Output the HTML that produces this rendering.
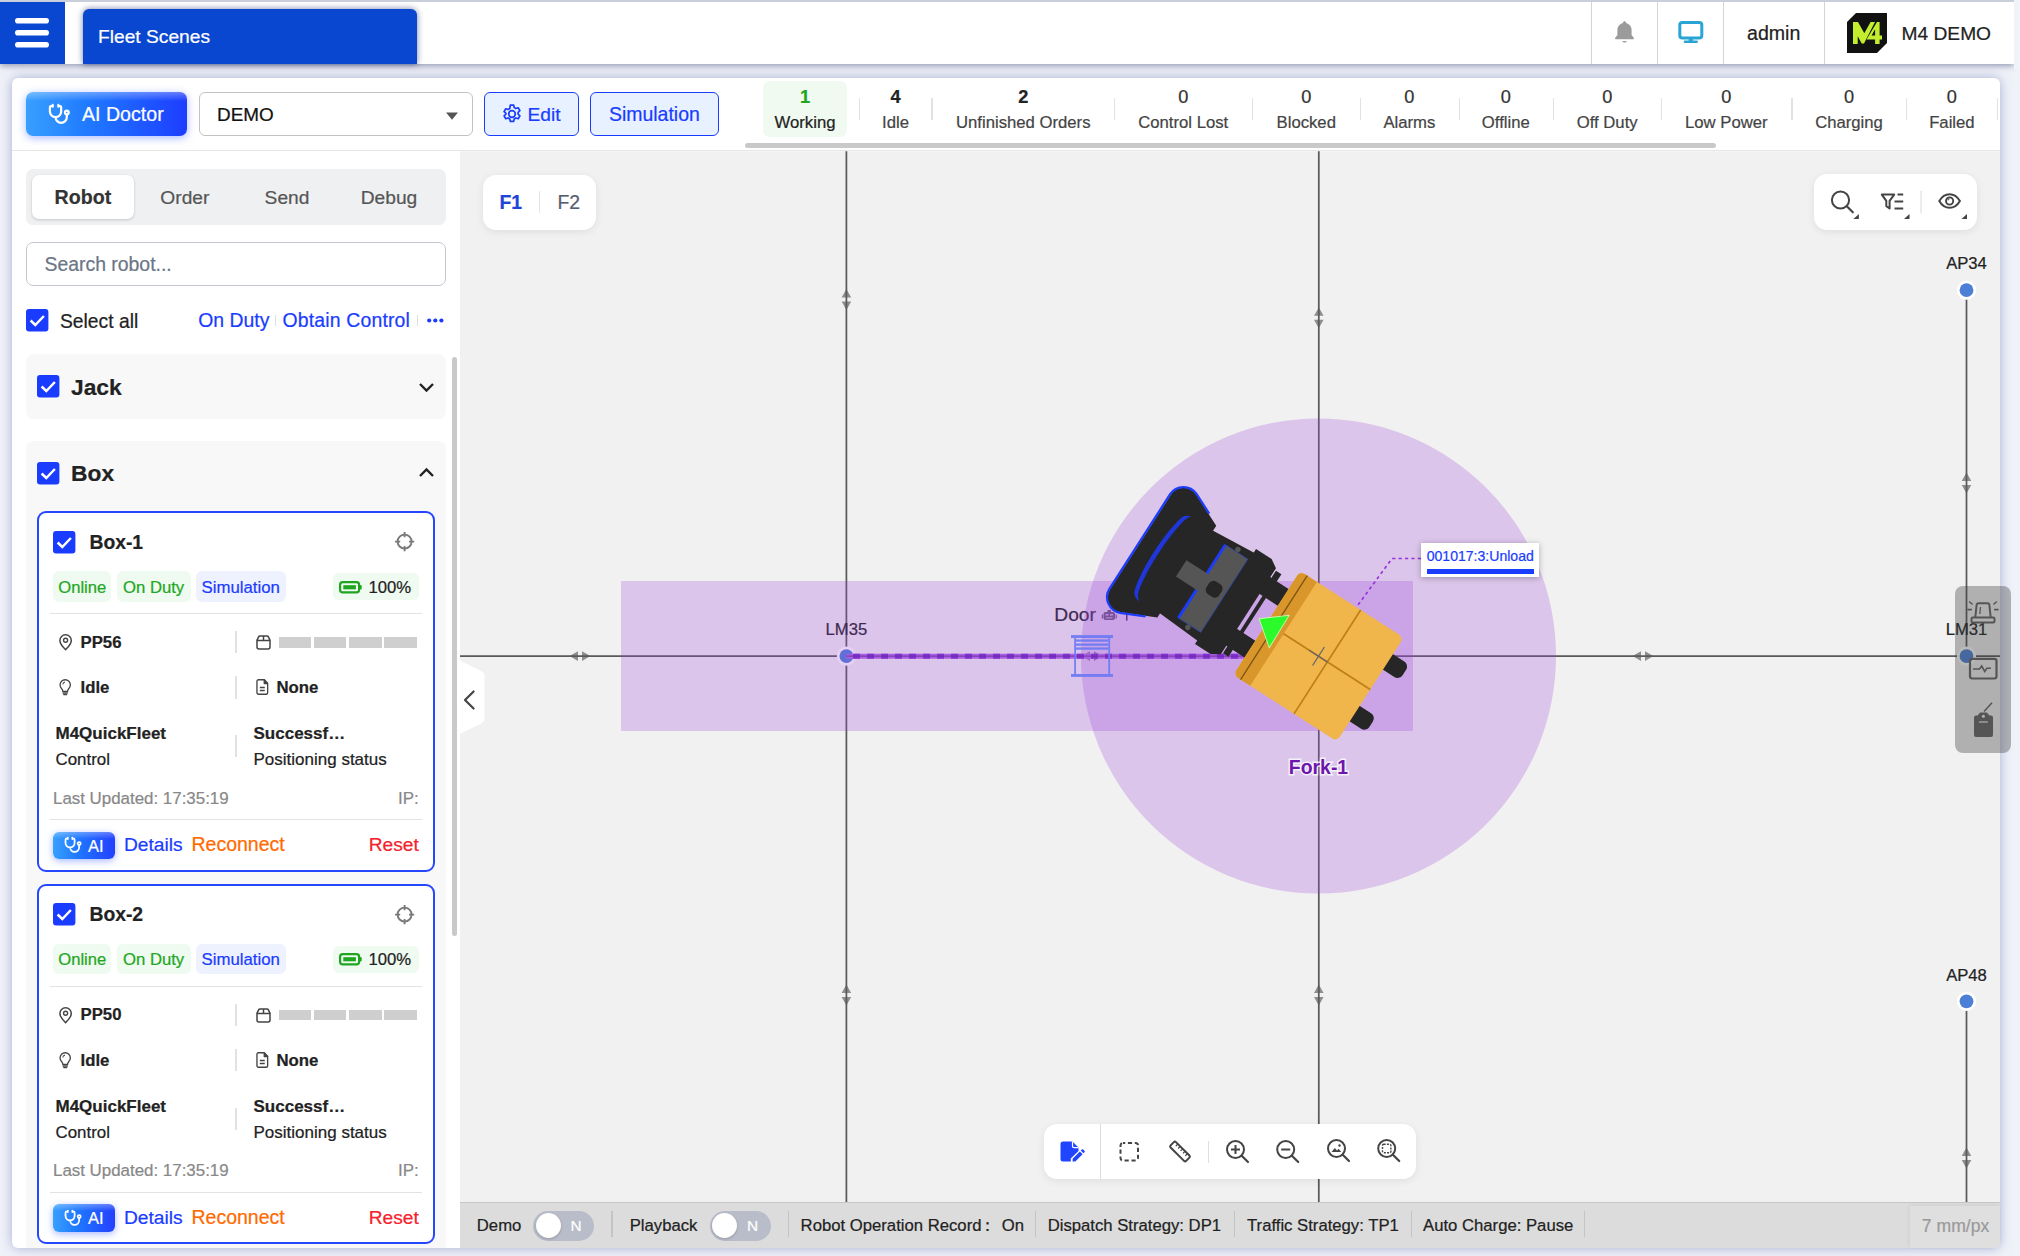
<!DOCTYPE html>
<html lang="en"><head><meta charset="utf-8"><title>Fleet Scenes</title>
<style>
html,body{margin:0;padding:0;}
body{width:2020px;height:1256px;overflow:hidden;position:relative;background:#e3e7f2;font-family:"Liberation Sans", sans-serif;}
.b{position:absolute;box-sizing:border-box;}
.t{position:absolute;white-space:nowrap;-webkit-text-stroke:.22px currentColor;}
svg{overflow:visible;}
</style></head><body>
<div class="b" style="left:0px;top:0px;width:2020px;height:1256px;background:#f0f2f9;"></div>
<div class="b" style="left:12px;top:78px;width:1988px;height:1169.5px;background:#fff;border-radius:6px;box-shadow:0 0 12px rgba(98,112,170,.52);"></div>
<div class="b" style="left:0px;top:0px;width:2014px;height:64px;background:#fff;border-top:2px solid #c9cedb;box-shadow:0 2px 6px rgba(60,70,115,.5);"></div>
<div class="b" style="left:2014px;top:0px;width:6px;height:70px;background:#f1f3f9;"></div>
<div class="b" style="left:0px;top:2px;width:65px;height:62px;background:#0a47d1;"></div>
<svg class="b" style="left:15px;top:18px;" width="34" height="30" viewBox="0 0 34 30"><rect x="0" y="0" width="34" height="5.6" rx="2.8" fill="#fff"/><rect x="0" y="12" width="34" height="5.6" rx="2.8" fill="#fff"/><rect x="0" y="24" width="34" height="5.6" rx="2.8" fill="#fff"/></svg>
<div class="b" style="left:83px;top:9px;width:334px;height:55px;background:#0a47d1;border-radius:6px 6px 0 0;box-shadow:0 0 6px rgba(0,20,90,.55);"></div>
<div class="t" style="top:26px;font-size:19.2px;line-height:21px;color:#fff;left:98px;">Fleet Scenes</div>
<div class="b" style="left:1591px;top:2px;width:1.3px;height:62px;background:#d4d4d4;"></div>
<div class="b" style="left:1657px;top:2px;width:1.3px;height:62px;background:#d4d4d4;"></div>
<div class="b" style="left:1723px;top:2px;width:1.3px;height:62px;background:#d4d4d4;"></div>
<div class="b" style="left:1824px;top:2px;width:1.3px;height:62px;background:#d4d4d4;"></div>
<svg class="b" style="left:1613px;top:20.3px;" width="23" height="24.5" viewBox="0 0 24 26" preserveAspectRatio="none"><path d="M12 1.2c-.9 0-1.6.7-1.6 1.6v.5C7 4.1 4.6 7.1 4.6 10.6v5.2L2.2 19c-.4.5 0 1.3.7 1.3h18.2c.7 0 1.1-.8.7-1.3l-2.4-3.2v-5.2c0-3.5-2.4-6.5-5.8-7.3v-.5c0-.9-.7-1.6-1.6-1.6z" fill="#9b9b9b"/><path d="M9.6 22.2c.4 1 1.300 1.600 2.400 1.600s2-.6 2.400-1.600z" fill="#9b9b9b"/></svg>
<svg class="b" style="left:0px;top:0px;" width="2020" height="64" viewBox="0 0 2020 64"><rect x="1679.800" y="22.500" width="22" height="15.500" rx="2.600" fill="none" stroke="#2aa5d3" stroke-width="3"/><rect x="1688.700" y="38.500" width="4.200" height="3" fill="#2aa5d3"/><rect x="1683.700" y="40.400" width="14.200" height="2.600" rx="1.200" fill="#2aa5d3"/></svg>
<div class="t" style="top:22px;font-size:19.6px;line-height:22px;color:#222;left:1747px;">admin</div>
<svg class="b" style="left:1847px;top:13px;" width="40" height="40" viewBox="0 0 40 40"><path d="M9 0H40V30L30 40H0V9Z" fill="#111"/><g fill="#c3ee2f"><path d="M6 31V9.500h5.200L17 20l0 0V31h-4.600V19.600L11 17.500V31z" fill="none"/><path d="M6 31V9h5l6.300 11.200L23.600 9H28l-11 21.500h-2.300l-4-7.300V31z"/><path d="M30 9h2.600v13.500H35v4h-2.400V31h-4.500v-4.500H19.500L30 9zm-1.900 13.500v-6.300l-3.500 6.300z"/></g></svg>
<div class="t" style="top:23px;font-size:19.2px;line-height:21px;color:#222;left:1901.5px;">M4 DEMO</div>
<div class="b" style="left:12px;top:150px;width:1988px;height:1.3px;background:#e6e6e6;"></div>
<div class="b" style="left:26px;top:91.5px;width:161px;height:44.5px;border-radius:7px;background:linear-gradient(180deg,rgba(255,255,255,.32) 0,rgba(255,255,255,0) 9px),linear-gradient(90deg,#38a0ff 0%,#1f78ff 40%,#1d3dff 100%);box-shadow:0 2px 8px rgba(40,80,255,.4);"></div>
<svg class="b" style="left:48.3px;top:102.9px;" width="22.6" height="22.6" viewBox="0 0 24 24"><g fill="none" stroke="#fff" stroke-width="2.350" stroke-linecap="round" stroke-linejoin="round"><path d="M11 2v2M5 2v2M5 3H4a2 2 0 0 0-2 2v4a6 6 0 0 0 12 0V5a2 2 0 0 0-2-2h-1M8 15a6 6 0 0 0 12 0v-3"/><circle cx="20" cy="10" r="2"/></g></svg>
<div class="t" style="top:103px;font-size:19.6px;line-height:22px;color:#fff;left:82px;">AI Doctor</div>
<div class="b" style="left:198.5px;top:92px;width:274px;height:44px;background:#fff;border:1.3px solid #c3c3c3;border-radius:6px;"></div>
<div class="t" style="top:104px;font-size:18.9px;line-height:21px;color:#111;left:217px;">DEMO</div>
<svg class="b" style="left:445.5px;top:111.5px;" width="12" height="8" viewBox="0 0 12 8"><path d="M0 0.500h12L6 7.800z" fill="#555"/></svg>
<div class="b" style="left:483.75px;top:91.75px;width:95px;height:44.5px;background:#e8f1ff;border:1.900px solid #1a3cff;border-radius:6px;"></div>
<svg class="b" style="left:501.75px;top:104px;" width="20" height="20" viewBox="0 0 20 20"><path d="M10 6.700a3.300 3.300 0 1 0 0 6.600a3.300 3.300 0 0 0 0-6.600z" fill="none" stroke="#1a3cff" stroke-width="1.700"/><path d="M8.300 1.200h3.400l.5 2.400 1.700.95 2.300-.8 1.700 2.950-1.800 1.600v1.900l1.800 1.600-1.700 2.950-2.300-.8-1.700.95-.5 2.400H8.300l-.5-2.400-1.700-.95-2.300.8-1.700-2.950 1.800-1.600V9.300L2.100 7.700l1.700-2.950 2.300.8 1.700-.95z" fill="none" stroke="#1a3cff" stroke-width="1.700" stroke-linejoin="round"/></svg>
<div class="t" style="top:104px;font-size:19.2px;line-height:21px;color:#1a3cff;left:527.5px;">Edit</div>
<div class="b" style="left:590.25px;top:91.75px;width:128.5px;height:44.5px;background:#e8f1ff;border:1.900px solid #1a3cff;border-radius:6px;"></div>
<div class="t" style="top:103px;font-size:19.45px;line-height:22px;color:#1a3cff;left:609px;">Simulation</div>
<div class="b" style="left:763.25px;top:81.25px;width:83.75px;height:55.5px;background:#f0faf1;border-radius:7px;"></div>
<div class="t" style="top:87px;font-size:18.2px;line-height:20px;color:#1fa51f;font-weight:700;left:805px;transform:translateX(-50%);">1</div>
<div class="t" style="top:113px;font-size:16.7px;line-height:19px;color:#222;left:805px;transform:translateX(-50%);">Working</div>
<div class="t" style="top:87px;font-size:18.2px;line-height:20px;color:#222;font-weight:700;left:895.5px;transform:translateX(-50%);">4</div>
<div class="t" style="top:113px;font-size:16.7px;line-height:19px;color:#444;left:895.5px;transform:translateX(-50%);">Idle</div>
<div class="t" style="top:87px;font-size:18.2px;line-height:20px;color:#222;font-weight:700;left:1023.25px;transform:translateX(-50%);">2</div>
<div class="t" style="top:113px;font-size:16.7px;line-height:19px;color:#444;left:1023.25px;transform:translateX(-50%);">Unfinished Orders</div>
<div class="t" style="top:87px;font-size:18.2px;line-height:20px;color:#333;left:1183.25px;transform:translateX(-50%);">0</div>
<div class="t" style="top:113px;font-size:16.7px;line-height:19px;color:#444;left:1183.25px;transform:translateX(-50%);">Control Lost</div>
<div class="t" style="top:87px;font-size:18.2px;line-height:20px;color:#333;left:1306.25px;transform:translateX(-50%);">0</div>
<div class="t" style="top:113px;font-size:16.7px;line-height:19px;color:#444;left:1306.25px;transform:translateX(-50%);">Blocked</div>
<div class="t" style="top:87px;font-size:18.2px;line-height:20px;color:#333;left:1409.4px;transform:translateX(-50%);">0</div>
<div class="t" style="top:113px;font-size:16.7px;line-height:19px;color:#444;left:1409.4px;transform:translateX(-50%);">Alarms</div>
<div class="t" style="top:87px;font-size:18.2px;line-height:20px;color:#333;left:1505.8px;transform:translateX(-50%);">0</div>
<div class="t" style="top:113px;font-size:16.7px;line-height:19px;color:#444;left:1505.8px;transform:translateX(-50%);">Offline</div>
<div class="t" style="top:87px;font-size:18.2px;line-height:20px;color:#333;left:1607.2px;transform:translateX(-50%);">0</div>
<div class="t" style="top:113px;font-size:16.7px;line-height:19px;color:#444;left:1607.2px;transform:translateX(-50%);">Off Duty</div>
<div class="t" style="top:87px;font-size:18.2px;line-height:20px;color:#333;left:1726.3px;transform:translateX(-50%);">0</div>
<div class="t" style="top:113px;font-size:16.7px;line-height:19px;color:#444;left:1726.3px;transform:translateX(-50%);">Low Power</div>
<div class="t" style="top:87px;font-size:18.2px;line-height:20px;color:#333;left:1849px;transform:translateX(-50%);">0</div>
<div class="t" style="top:113px;font-size:16.7px;line-height:19px;color:#444;left:1849px;transform:translateX(-50%);">Charging</div>
<div class="t" style="top:87px;font-size:18.2px;line-height:20px;color:#333;left:1951.9px;transform:translateX(-50%);">0</div>
<div class="t" style="top:113px;font-size:16.7px;line-height:19px;color:#444;left:1951.9px;transform:translateX(-50%);">Failed</div>
<div class="b" style="left:858.55px;top:97.5px;width:1.4px;height:22px;background:#e2e2e2;"></div>
<div class="b" style="left:931.3px;top:97.5px;width:1.4px;height:22px;background:#e2e2e2;"></div>
<div class="b" style="left:1113.55px;top:97.5px;width:1.4px;height:22px;background:#e2e2e2;"></div>
<div class="b" style="left:1251.8px;top:97.5px;width:1.4px;height:22px;background:#e2e2e2;"></div>
<div class="b" style="left:1359.8px;top:97.5px;width:1.4px;height:22px;background:#e2e2e2;"></div>
<div class="b" style="left:1458.5px;top:97.5px;width:1.4px;height:22px;background:#e2e2e2;"></div>
<div class="b" style="left:1552.8999999999999px;top:97.5px;width:1.4px;height:22px;background:#e2e2e2;"></div>
<div class="b" style="left:1660.7px;top:97.5px;width:1.4px;height:22px;background:#e2e2e2;"></div>
<div class="b" style="left:1791.2px;top:97.5px;width:1.4px;height:22px;background:#e2e2e2;"></div>
<div class="b" style="left:1905.8999999999999px;top:97.5px;width:1.4px;height:22px;background:#e2e2e2;"></div>
<div class="b" style="left:1996.8px;top:97.5px;width:1.4px;height:22px;background:#e2e2e2;"></div>
<div class="b" style="left:744.5px;top:142.5px;width:971px;height:5px;background:#c9c9c9;border-radius:2.500px;"></div>
<div class="b" style="left:26px;top:169px;width:420px;height:55.5px;background:#eff0f2;border-radius:7px;"></div>
<div class="b" style="left:31.75px;top:174.5px;width:102px;height:44.5px;background:#fff;border-radius:7px;box-shadow:0 1px 3px rgba(0,0,0,.18);"></div>
<div class="t" style="top:186px;font-size:19.6px;line-height:22px;color:#333;font-weight:700;left:82.9px;transform:translateX(-50%);">Robot</div>
<div class="t" style="top:187px;font-size:19.2px;line-height:21px;color:#555;left:184.9px;transform:translateX(-50%);">Order</div>
<div class="t" style="top:187px;font-size:19.2px;line-height:21px;color:#555;left:287px;transform:translateX(-50%);">Send</div>
<div class="t" style="top:187px;font-size:19.2px;line-height:21px;color:#555;left:389px;transform:translateX(-50%);">Debug</div>
<div class="b" style="left:26px;top:242px;width:420px;height:44px;background:#fff;border:1.500px solid #c4c8d0;border-radius:7px;"></div>
<div class="t" style="top:253px;font-size:19.4px;line-height:22px;color:#6b7686;left:44.5px;">Search robot...</div>
<svg class="b" style="left:26px;top:309.25px;" width="22.4" height="22.4" viewBox="0 0 22.4 22.4"><rect x="0" y="0" width="22.4" height="22.4" rx="3" fill="#1a3cff"/><path d="M4.600 11.500l4.700 4.500 8.600-9" fill="none" stroke="#fff" stroke-width="2.500"/></svg>
<div class="t" style="top:311px;font-size:19.3px;line-height:21px;color:#222;left:60px;">Select all</div>
<div class="t" style="top:309px;font-size:19.4px;line-height:22px;color:#1a3cff;left:198.25px;">On Duty</div>
<div class="b" style="left:275.2px;top:314.5px;width:1.3px;height:11.5px;background:#e0e0e0;"></div>
<div class="t" style="top:309px;font-size:19.4px;line-height:22px;color:#1a3cff;left:282.5px;letter-spacing:.18px;">Obtain Control</div>
<div class="b" style="left:416.5px;top:314.5px;width:1.3px;height:11.5px;background:#e0e0e0;"></div>
<svg class="b" style="left:427px;top:317.5px;" width="17" height="5" viewBox="0 0 17 5"><circle cx="2.200" cy="2.500" r="2.100" fill="#1a3cff"/><circle cx="8.300" cy="2.500" r="2.100" fill="#1a3cff"/><circle cx="14.400" cy="2.500" r="2.100" fill="#1a3cff"/></svg>
<div class="b" style="left:26px;top:354.25px;width:420px;height:64.5px;background:#f8f8f8;border-radius:8px;"></div>
<svg class="b" style="left:37px;top:375px;" width="22.4" height="22.4" viewBox="0 0 22.4 22.4"><rect x="0" y="0" width="22.4" height="22.4" rx="3" fill="#1a3cff"/><path d="M4.600 11.500l4.700 4.500 8.600-9" fill="none" stroke="#fff" stroke-width="2.500"/></svg>
<div class="t" style="top:374px;font-size:22.8px;line-height:26px;color:#222;font-weight:700;left:71px;">Jack</div>
<svg class="b" style="left:419px;top:382.5px;" width="15" height="9" viewBox="0 0 15 9"><path d="M1 1l6.500 6.500L14 1" fill="none" stroke="#222" stroke-width="2.400"/></svg>
<div class="b" style="left:26px;top:440.5px;width:420px;height:807px;background:#f8f8f8;border-radius:8px 8px 0 0;"></div>
<svg class="b" style="left:37px;top:461.75px;" width="22.4" height="22.4" viewBox="0 0 22.4 22.4"><rect x="0" y="0" width="22.4" height="22.4" rx="3" fill="#1a3cff"/><path d="M4.600 11.500l4.700 4.500 8.600-9" fill="none" stroke="#fff" stroke-width="2.500"/></svg>
<div class="t" style="top:460px;font-size:22.8px;line-height:26px;color:#222;font-weight:700;left:71px;">Box</div>
<svg class="b" style="left:419px;top:468px;" width="15" height="9" viewBox="0 0 15 9"><path d="M1 8l6.500-6.500L14 8" fill="none" stroke="#222" stroke-width="2.400"/></svg>
<div class="b" style="left:451.5px;top:357px;width:5.5px;height:579px;background:#c9c9c9;border-radius:2.750px;"></div>
<div class="b" style="left:37px;top:511px;width:398px;height:360.5px;background:#fff;border:2px solid #2447ff;border-radius:9px;"></div>
<svg class="b" style="left:52.5px;top:530.5px;" width="22.4" height="22.4" viewBox="0 0 22.4 22.4"><rect x="0" y="0" width="22.4" height="22.4" rx="3" fill="#1a3cff"/><path d="M4.600 11.500l4.700 4.500 8.600-9" fill="none" stroke="#fff" stroke-width="2.500"/></svg>
<div class="t" style="top:532px;font-size:19.3px;line-height:21px;color:#222;font-weight:700;left:89.5px;">Box-1</div>
<svg class="b" style="left:394.5px;top:532.2px;" width="19.2" height="19.2" viewBox="0 0 19.2 19.2"><circle cx="9.600" cy="9.600" r="7" fill="none" stroke="#7a7a7a" stroke-width="1.900"/><path d="M9.600 0v5.200M9.600 14v5.200M0 9.600h5.200M14 9.600h5.200" stroke="#7a7a7a" stroke-width="1.900"/></svg>
<div class="b" style="left:52.5px;top:571.25px;width:58.75px;height:30.5px;background:#effaf0;border-radius:6px;"></div>
<div class="t" style="top:578px;font-size:16.6px;line-height:19px;color:#22a722;left:58.25px;">Online</div>
<div class="b" style="left:117px;top:571.25px;width:73.5px;height:30.5px;background:#effaf0;border-radius:6px;"></div>
<div class="t" style="top:578px;font-size:16.7px;line-height:19px;color:#22a722;left:123px;">On Duty</div>
<div class="b" style="left:196.25px;top:571.25px;width:89.25px;height:30.5px;background:#eef2ff;border-radius:6px;"></div>
<div class="t" style="top:578px;font-size:16.8px;line-height:19px;color:#1a3cff;left:201.5px;">Simulation</div>
<div class="b" style="left:333px;top:573px;width:86px;height:27px;background:#effaf0;border-radius:6px;"></div>
<svg class="b" style="left:339px;top:580.5px;" width="23" height="12.5" viewBox="0 0 23 12.5"><rect x="1.100" y="1.100" width="19" height="10.300" rx="2.600" fill="none" stroke="#1fa51f" stroke-width="2.200"/><rect x="4.300" y="4.200" width="12.600" height="4.100" fill="#1fa51f"/><rect x="20.600" y="4" width="2.100" height="4.500" rx="1" fill="#1fa51f"/></svg>
<div class="t" style="top:578px;font-size:16.7px;line-height:19px;color:#222;left:368.5px;">100%</div>
<div class="b" style="left:50px;top:613px;width:372px;height:1.3px;background:#e2e2e2;"></div>
<svg class="b" style="left:58.5px;top:634.25px;" width="13.2" height="16.5" viewBox="0 0 13.2 16.5"><path d="M6.600 0.800c-3.200 0-5.700 2.500-5.700 5.600 0 3.900 4.200 7.700 5.700 9.300 1.500-1.600 5.700-5.400 5.700-9.300 0-3.100-2.500-5.600-5.700-5.600z" fill="none" stroke="#444" stroke-width="1.500"/><circle cx="6.600" cy="6.300" r="2" fill="none" stroke="#444" stroke-width="1.400"/></svg>
<div class="t" style="top:633px;font-size:16.75px;line-height:19px;color:#222;font-weight:700;left:80.5px;">PP56</div>
<div class="b" style="left:235px;top:631.25px;width:1.5px;height:22px;background:#e2e2e2;"></div>
<svg class="b" style="left:256px;top:635px;" width="15" height="14.6" viewBox="0 0 15 14.6"><path d="M1 5.400h13v6.600a2 2 0 0 1-2 2H3a2 2 0 0 1-2-2z" fill="none" stroke="#444" stroke-width="1.500"/><path d="M1 5.400l1.600-3.500a1.500 1.500 0 0 1 1.400-.9h7a1.500 1.500 0 0 1 1.400.9L14 5.400M7.500 1v4.400" fill="none" stroke="#444" stroke-width="1.500"/></svg>
<div class="b" style="left:278.75px;top:637px;width:32.4px;height:10.75px;background:#cfcfcf;"></div>
<div class="b" style="left:313.95px;top:637px;width:32.4px;height:10.75px;background:#cfcfcf;"></div>
<div class="b" style="left:349.15px;top:637px;width:32.4px;height:10.75px;background:#cfcfcf;"></div>
<div class="b" style="left:384.35px;top:637px;width:32.4px;height:10.75px;background:#cfcfcf;"></div>
<svg class="b" style="left:58.7px;top:679.3px;" width="12.4" height="16.6" viewBox="0 0 13.2 17" preserveAspectRatio="none"><path d="M6.600 0.800c-3.100 0-5.500 2.400-5.500 5.300 0 1.900 1 3.200 2.100 4.400.6.700.9 1.400.9 2.200h5c0-.8.300-1.500.9-2.200 1.100-1.200 2.100-2.500 2.100-4.400 0-2.900-2.400-5.300-5.500-5.300z" fill="none" stroke="#444" stroke-width="1.400"/><path d="M4.300 14.300h4.600M5 16h3.200" stroke="#444" stroke-width="1.400" fill="none" stroke-linecap="round"/><path d="M4 5.600c.2-1.300 1.100-2.200 2.300-2.400" stroke="#444" stroke-width="1.100" fill="none"/></svg>
<div class="t" style="top:678px;font-size:16.75px;line-height:19px;color:#222;font-weight:700;left:80.5px;">Idle</div>
<div class="b" style="left:235px;top:676.25px;width:1.5px;height:22.5px;background:#e2e2e2;"></div>
<svg class="b" style="left:255.5px;top:679.3px;" width="12.6" height="16.1" viewBox="0 0 13.2 16.1" preserveAspectRatio="none"><path d="M2.500 0.800h6.200l3.500 3.600v9.400a1.500 1.500 0 0 1-1.500 1.500H2.500a1.500 1.500 0 0 1-1.500-1.500V2.300a1.500 1.500 0 0 1 1.500-1.500z" fill="none" stroke="#444" stroke-width="1.400"/><path d="M8.500 0.800v3.800h3.700z" fill="#444" stroke="#444" stroke-width="1.100" stroke-linejoin="round"/><path d="M4 8.600h5.200M4 11.600h5.200" fill="none" stroke="#444" stroke-width="1.500"/></svg>
<div class="t" style="top:678px;font-size:16.75px;line-height:19px;color:#222;font-weight:700;left:276.5px;">None</div>
<div class="t" style="top:724px;font-size:17px;line-height:19px;color:#222;font-weight:700;left:55.5px;">M4QuickFleet</div>
<div class="t" style="top:750px;font-size:16.9px;line-height:19px;color:#222;left:55.5px;">Control</div>
<div class="b" style="left:235px;top:735px;width:1.5px;height:22px;background:#e2e2e2;"></div>
<div class="t" style="top:724px;font-size:17px;line-height:19px;color:#222;font-weight:700;left:253.5px;">Successf…</div>
<div class="t" style="top:750px;font-size:17px;line-height:19px;color:#222;left:253.5px;">Positioning status</div>
<div class="t" style="top:789px;font-size:16.9px;line-height:19px;color:#888;left:53px;">Last Updated: 17:35:19</div>
<div class="t" style="top:789px;font-size:16.9px;line-height:19px;color:#888;right:1601.25px;">IP:</div>
<div class="b" style="left:50px;top:819px;width:372px;height:1.3px;background:#e2e2e2;"></div>
<div class="b" style="left:52.5px;top:831.5px;width:62.5px;height:27.75px;border-radius:6px;background:linear-gradient(180deg,rgba(255,255,255,.3) 0,rgba(255,255,255,0) 7px),linear-gradient(90deg,#38a0ff 0%,#1f78ff 40%,#2440ff 100%);box-shadow:0 2px 7px rgba(40,80,255,.4);"></div>
<svg class="b" style="left:64px;top:836.2px;" width="18.2" height="18.2" viewBox="0 0 24 24"><g fill="none" stroke="#fff" stroke-width="2.350" stroke-linecap="round" stroke-linejoin="round"><path d="M11 2v2M5 2v2M5 3H4a2 2 0 0 0-2 2v4a6 6 0 0 0 12 0V5a2 2 0 0 0-2-2h-1M8 15a6 6 0 0 0 12 0v-3"/><circle cx="20" cy="10" r="2"/></g></svg>
<div class="t" style="top:837px;font-size:16.5px;line-height:18px;color:#fff;left:88px;">AI</div>
<div class="t" style="top:834px;font-size:19.2px;line-height:21px;color:#1a3cff;left:124px;">Details</div>
<div class="t" style="top:833px;font-size:19.5px;line-height:22px;color:#ff6a00;left:191.5px;">Reconnect</div>
<div class="t" style="top:834px;font-size:19.2px;line-height:21px;color:#f5222d;right:1601.25px;">Reset</div>
<div class="b" style="left:37px;top:883.5px;width:398px;height:360.5px;background:#fff;border:2px solid #2447ff;border-radius:9px;"></div>
<svg class="b" style="left:52.5px;top:903.0px;" width="22.4" height="22.4" viewBox="0 0 22.4 22.4"><rect x="0" y="0" width="22.4" height="22.4" rx="3" fill="#1a3cff"/><path d="M4.600 11.500l4.700 4.500 8.600-9" fill="none" stroke="#fff" stroke-width="2.500"/></svg>
<div class="t" style="top:904px;font-size:19.3px;line-height:21px;color:#222;font-weight:700;left:89.5px;">Box-2</div>
<svg class="b" style="left:394.5px;top:904.7px;" width="19.2" height="19.2" viewBox="0 0 19.2 19.2"><circle cx="9.600" cy="9.600" r="7" fill="none" stroke="#7a7a7a" stroke-width="1.900"/><path d="M9.600 0v5.200M9.600 14v5.200M0 9.600h5.200M14 9.600h5.200" stroke="#7a7a7a" stroke-width="1.900"/></svg>
<div class="b" style="left:52.5px;top:943.75px;width:58.75px;height:30.5px;background:#effaf0;border-radius:6px;"></div>
<div class="t" style="top:950px;font-size:16.6px;line-height:19px;color:#22a722;left:58.25px;">Online</div>
<div class="b" style="left:117px;top:943.75px;width:73.5px;height:30.5px;background:#effaf0;border-radius:6px;"></div>
<div class="t" style="top:950px;font-size:16.7px;line-height:19px;color:#22a722;left:123px;">On Duty</div>
<div class="b" style="left:196.25px;top:943.75px;width:89.25px;height:30.5px;background:#eef2ff;border-radius:6px;"></div>
<div class="t" style="top:950px;font-size:16.8px;line-height:19px;color:#1a3cff;left:201.5px;">Simulation</div>
<div class="b" style="left:333px;top:945.5px;width:86px;height:27px;background:#effaf0;border-radius:6px;"></div>
<svg class="b" style="left:339px;top:953.0px;" width="23" height="12.5" viewBox="0 0 23 12.5"><rect x="1.100" y="1.100" width="19" height="10.300" rx="2.600" fill="none" stroke="#1fa51f" stroke-width="2.200"/><rect x="4.300" y="4.200" width="12.600" height="4.100" fill="#1fa51f"/><rect x="20.600" y="4" width="2.100" height="4.500" rx="1" fill="#1fa51f"/></svg>
<div class="t" style="top:950px;font-size:16.7px;line-height:19px;color:#222;left:368.5px;">100%</div>
<div class="b" style="left:50px;top:985.5px;width:372px;height:1.3px;background:#e2e2e2;"></div>
<svg class="b" style="left:58.5px;top:1006.75px;" width="13.2" height="16.5" viewBox="0 0 13.2 16.5"><path d="M6.600 0.800c-3.200 0-5.700 2.500-5.700 5.600 0 3.900 4.200 7.700 5.700 9.300 1.500-1.600 5.700-5.400 5.700-9.300 0-3.100-2.500-5.600-5.700-5.600z" fill="none" stroke="#444" stroke-width="1.500"/><circle cx="6.600" cy="6.300" r="2" fill="none" stroke="#444" stroke-width="1.400"/></svg>
<div class="t" style="top:1005px;font-size:16.75px;line-height:19px;color:#222;font-weight:700;left:80.5px;">PP50</div>
<div class="b" style="left:235px;top:1003.75px;width:1.5px;height:22px;background:#e2e2e2;"></div>
<svg class="b" style="left:256px;top:1007.5px;" width="15" height="14.6" viewBox="0 0 15 14.6"><path d="M1 5.400h13v6.600a2 2 0 0 1-2 2H3a2 2 0 0 1-2-2z" fill="none" stroke="#444" stroke-width="1.500"/><path d="M1 5.400l1.600-3.500a1.500 1.500 0 0 1 1.400-.9h7a1.500 1.500 0 0 1 1.400.9L14 5.400M7.500 1v4.400" fill="none" stroke="#444" stroke-width="1.500"/></svg>
<div class="b" style="left:278.75px;top:1009.5px;width:32.4px;height:10.75px;background:#cfcfcf;"></div>
<div class="b" style="left:313.95px;top:1009.5px;width:32.4px;height:10.75px;background:#cfcfcf;"></div>
<div class="b" style="left:349.15px;top:1009.5px;width:32.4px;height:10.75px;background:#cfcfcf;"></div>
<div class="b" style="left:384.35px;top:1009.5px;width:32.4px;height:10.75px;background:#cfcfcf;"></div>
<svg class="b" style="left:58.7px;top:1051.8px;" width="12.4" height="16.6" viewBox="0 0 13.2 17" preserveAspectRatio="none"><path d="M6.600 0.800c-3.100 0-5.500 2.400-5.500 5.300 0 1.900 1 3.200 2.100 4.400.6.700.9 1.400.9 2.200h5c0-.8.300-1.500.9-2.200 1.100-1.200 2.100-2.500 2.100-4.400 0-2.900-2.400-5.300-5.500-5.300z" fill="none" stroke="#444" stroke-width="1.400"/><path d="M4.300 14.300h4.600M5 16h3.200" stroke="#444" stroke-width="1.400" fill="none" stroke-linecap="round"/><path d="M4 5.600c.2-1.300 1.100-2.200 2.300-2.400" stroke="#444" stroke-width="1.100" fill="none"/></svg>
<div class="t" style="top:1051px;font-size:16.75px;line-height:19px;color:#222;font-weight:700;left:80.5px;">Idle</div>
<div class="b" style="left:235px;top:1048.75px;width:1.5px;height:22.5px;background:#e2e2e2;"></div>
<svg class="b" style="left:255.5px;top:1051.8px;" width="12.6" height="16.1" viewBox="0 0 13.2 16.1" preserveAspectRatio="none"><path d="M2.500 0.800h6.200l3.500 3.600v9.400a1.500 1.500 0 0 1-1.500 1.500H2.500a1.500 1.500 0 0 1-1.500-1.500V2.300a1.500 1.500 0 0 1 1.500-1.500z" fill="none" stroke="#444" stroke-width="1.400"/><path d="M8.500 0.800v3.800h3.700z" fill="#444" stroke="#444" stroke-width="1.100" stroke-linejoin="round"/><path d="M4 8.600h5.200M4 11.600h5.200" fill="none" stroke="#444" stroke-width="1.500"/></svg>
<div class="t" style="top:1051px;font-size:16.75px;line-height:19px;color:#222;font-weight:700;left:276.5px;">None</div>
<div class="t" style="top:1097px;font-size:17px;line-height:19px;color:#222;font-weight:700;left:55.5px;">M4QuickFleet</div>
<div class="t" style="top:1123px;font-size:16.9px;line-height:19px;color:#222;left:55.5px;">Control</div>
<div class="b" style="left:235px;top:1107.5px;width:1.5px;height:22px;background:#e2e2e2;"></div>
<div class="t" style="top:1097px;font-size:17px;line-height:19px;color:#222;font-weight:700;left:253.5px;">Successf…</div>
<div class="t" style="top:1123px;font-size:17px;line-height:19px;color:#222;left:253.5px;">Positioning status</div>
<div class="t" style="top:1161px;font-size:16.9px;line-height:19px;color:#888;left:53px;">Last Updated: 17:35:19</div>
<div class="t" style="top:1161px;font-size:16.9px;line-height:19px;color:#888;right:1601.25px;">IP:</div>
<div class="b" style="left:50px;top:1191.5px;width:372px;height:1.3px;background:#e2e2e2;"></div>
<div class="b" style="left:52.5px;top:1204.0px;width:62.5px;height:27.75px;border-radius:6px;background:linear-gradient(180deg,rgba(255,255,255,.3) 0,rgba(255,255,255,0) 7px),linear-gradient(90deg,#38a0ff 0%,#1f78ff 40%,#2440ff 100%);box-shadow:0 2px 7px rgba(40,80,255,.4);"></div>
<svg class="b" style="left:64px;top:1208.7px;" width="18.2" height="18.2" viewBox="0 0 24 24"><g fill="none" stroke="#fff" stroke-width="2.350" stroke-linecap="round" stroke-linejoin="round"><path d="M11 2v2M5 2v2M5 3H4a2 2 0 0 0-2 2v4a6 6 0 0 0 12 0V5a2 2 0 0 0-2-2h-1M8 15a6 6 0 0 0 12 0v-3"/><circle cx="20" cy="10" r="2"/></g></svg>
<div class="t" style="top:1209px;font-size:16.5px;line-height:18px;color:#fff;left:88px;">AI</div>
<div class="t" style="top:1207px;font-size:19.2px;line-height:21px;color:#1a3cff;left:124px;">Details</div>
<div class="t" style="top:1206px;font-size:19.5px;line-height:22px;color:#ff6a00;left:191.5px;">Reconnect</div>
<div class="t" style="top:1207px;font-size:19.2px;line-height:21px;color:#f5222d;right:1601.25px;">Reset</div>
<svg class="b" style="left:0px;top:0px;" width="2020" height="1256" viewBox="0 0 2020 1256"><rect x="460" y="151.300" width="1540" height="1051" fill="#f1f1f1"/><path d="M846.4 289.1l4.800 8.400h-9.600zM846.4 309.9l4.800-8.400h-9.600z" fill="#8e8e8e"/><path d="M1318.8 307.40000000000003l4.800 8.400h-9.600zM1318.8 328.2l4.800-8.400h-9.600z" fill="#8e8e8e"/><path d="M846.4 984.6l4.800 8.400h-9.600zM846.4 1005.4l4.800-8.400h-9.600z" fill="#8e8e8e"/><path d="M1318.8 984.6l4.800 8.400h-9.600zM1318.8 1005.4l4.800-8.400h-9.600z" fill="#8e8e8e"/><path d="M1966.5 472.6l4.800 8.400h-9.600zM1966.5 493.4l4.800-8.400h-9.600z" fill="#8e8e8e"/><path d="M1966.5 1147.6l4.800 8.400h-9.600zM1966.5 1168.4l4.800-8.400h-9.600z" fill="#8e8e8e"/><path d="M569.6 656.1l8.400-4.800v9.600zM590.4 656.1l-8.400-4.800v9.600z" fill="#8e8e8e"/><path d="M1632.6 656.1l8.400-4.800v9.600zM1653.4 656.1l-8.400-4.800v9.600z" fill="#8e8e8e"/><path d="M1081.6 656.1l8.400-4.800v9.600zM1102.4 656.1l-8.400-4.800v9.600z" fill="#8e8e8e"/><g stroke="#5a5a5a" stroke-width="1.750" fill="none"><path d="M846.400 151.300V1202M1318.800 151.300V1202M1966.500 290V656M1966.500 1001V1202M460 656.100H2000"/></g><g font-family="Liberation Sans, sans-serif" font-size="16.640" fill="#222" stroke="#222" stroke-width=".22" text-anchor="middle"><text x="846.400" y="634.800">LM35</text><text x="1966.500" y="269">AP34</text><text x="1966.500" y="980.500">AP48</text><text x="1966.500" y="635">LM31</text></g><text x="1054.300" y="620.650" font-family="Liberation Sans, sans-serif" font-size="19.200" fill="#222" stroke="#222" stroke-width=".22">Door</text><g fill="#5d5d66"><rect x="1103.500" y="612" width="11.500" height="8" rx="2"/><rect x="1107.500" y="610" width="3.500" height="2.500"/><rect x="1101.800" y="614.500" width="1.200" height="4"/><rect x="1115.600" y="614.500" width="1.200" height="4"/></g><rect x="1105.500" y="614" width="3" height="1.600" fill="#cfc0e0"/><rect x="1110" y="614" width="3" height="1.600" fill="#cfc0e0"/><rect x="1106" y="617.300" width="6.500" height="1.100" fill="#cfc0e0"/><rect x="1126" y="612" width="1.500" height="8.600" fill="#3a2a55"/><circle cx="846.4" cy="656.1" r="9.600000000000001" fill="#fff"/><circle cx="846.4" cy="656.1" r="6.9" fill="#4d7fd6"/><circle cx="1966.5" cy="290.2" r="9.600000000000001" fill="#fff"/><circle cx="1966.5" cy="290.2" r="6.9" fill="#4d7fd6"/><circle cx="1966.5" cy="1001.3" r="9.600000000000001" fill="#fff"/><circle cx="1966.5" cy="1001.3" r="6.9" fill="#4d7fd6"/><circle cx="1966.5" cy="656.1" r="9.600000000000001" fill="#fff"/><circle cx="1966.5" cy="656.1" r="6.9" fill="#4d7fd6"/><rect x="621" y="581" width="792" height="150" fill="rgba(157,69,221,.25)"/><circle cx="1318.500" cy="656" r="237.500" fill="rgba(157,69,221,.25)"/><path d="M846.400 656.200H1250" stroke="#a95de0" stroke-width="5" fill="none"/><path d="M853 656.200H1250" stroke="#8431d3" stroke-width="5" stroke-dasharray="7 7" fill="none"/><path d="M846.400 656.200H1250" stroke="#5b2a8a" stroke-width="1.200" fill="none" opacity=".55"/><g fill="#6a78f5" fill-opacity=".9"><rect x="1071" y="635.100" width="42" height="2.900"/><rect x="1071" y="674" width="42" height="2.900"/><rect x="1074.200" y="638" width="1.800" height="36"/><rect x="1108.300" y="638" width="1.800" height="36"/><rect x="1076" y="639.400" width="32.300" height="2.300"/><rect x="1076" y="643.500" width="32.300" height="2.300"/><rect x="1076" y="647.400" width="32.300" height="2.300"/></g></svg>
<svg class="b" style="left:0px;top:0px;" width="2020" height="1256" viewBox="0 0 2020 1256"><g transform="translate(1318.500 656.250) rotate(32.700)"><g fill="#262626"><rect x="-84" y="-40.500" width="27" height="20"/><rect x="-84" y="21" width="27" height="20"/><path d="M58 -42h17a6 6 0 0 1 6 6v6.500a6 6 0 0 1-6 6H58z"/><path d="M58 19.500h17a6 6 0 0 1 6 6v6.500a6 6 0 0 1-6 6H58z"/><rect x="-82" y="-49" width="6.500" height="9"/><rect x="-82" y="40.500" width="6.500" height="8.500"/><rect x="-79.700" y="-21" width="4" height="43"/><path d="M-110.500 -56.500H-92L-83.300 -51V-20.500H-83.300V51L-92 56.500H-110.500z"/><path d="M-158 -48.500L-108 -52.500V52.500L-158 49.500z"/><path d="M-156.500 -54.500L-190.100 -69.800A15 15 0 0 0 -211.500 -56.200V56.200A15 15 0 0 0 -190.100 69.800L-156.500 54.500z"/></g><path d="M-169 -61L-190.400 -70.700A16 16 0 0 0 -212.400 -56.200V56.200A16 16 0 0 0 -190.400 70.700L-167 60" fill="none" stroke="#1a3cff" stroke-width="2.200"/><path d="M-182.500 -48.700C-186 -48 -188.500 -46.500 -190 -43.500C-196.500 -20 -196.500 22 -190 45C-188 48.500 -185 50.300 -180.500 50.800C-184 48 -185.500 45.500 -186.500 42C-191.500 20 -191.500 -18 -186.500 -41C-185.500 -45 -184.500 -47 -182.500 -48.700z" fill="#1f36d8"/><rect x="-138.500" y="-43.500" width="26.500" height="87" fill="#555" stroke="#2b4bb5" stroke-width=".7"/><rect x="-140" y="-43.500" width="2.800" height="87" fill="#1a3cff"/><rect x="-163" y="-9.500" width="27" height="19.500" fill="#555"/><rect x="-131.500" y="-7.500" width="15" height="15" rx="5" fill="#262626"/><circle cx="-125.500" cy="-46.300" r="2.700" fill="#555"/><circle cx="-125.500" cy="46.300" r="2.700" fill="#555"/><rect x="-61.500" y="-61.700" width="123" height="123.400" rx="5.500" fill="#f0b54b"/><path d="M-41.500 -61.700H-56a5.500 5.500 0 0 0-5.500 5.500V56.200a5.500 5.500 0 0 0 5.500 5.500H-41.500z" fill="#d9962a"/><path d="M-53 -61.700V61.700" stroke="#7d5413" stroke-width="1.300"/><path d="M10.500 -61.700V61.700M-41.500 0H61.500" stroke="#bf7f17" stroke-width="1.700" fill="none"/><path d="M-11 0H11M0 -11V11" stroke="#666" stroke-width="1.300" fill="none"/><path d="M-70.300 0.500L-46.800 -18.500L-46 19.500z" fill="#2bfb2b" stroke="#c9f7b0" stroke-width=".9"/></g><path d="M1421 558.500H1392L1356.500 607" fill="none" stroke="#9a32dc" stroke-width="1.700" stroke-dasharray="3.200 3.200"/></svg>
<div class="b" style="left:1421px;top:542.5px;width:118.3px;height:34px;background:#fff;box-shadow:0 1px 6px rgba(0,0,0,.28);"></div>
<div class="t" style="top:548px;font-size:14.05px;line-height:16px;color:#1a3cff;left:1426.75px;">001017:3:Unload</div>
<div class="b" style="left:1426.75px;top:569.2px;width:106.8px;height:5.2px;background:#1a3cff;"></div>
<div class="t" style="top:756px;font-size:19.4px;line-height:22px;color:#6d16ad;font-weight:700;left:1318.5px;transform:translateX(-50%);-webkit-text-stroke:3px rgba(255,255,255,.75);paint-order:stroke fill;">Fork-1</div>
<div class="b" style="left:482.5px;top:174.5px;width:113.3px;height:55.5px;background:#fff;border-radius:13px;box-shadow:0 2px 8px rgba(0,0,0,.08);"></div>
<div class="t" style="top:191px;font-size:19.4px;line-height:22px;color:#1f45d8;font-weight:700;left:499.5px;">F1</div>
<div class="b" style="left:538.7px;top:191px;width:1.3px;height:22px;background:#e3e5ee;"></div>
<div class="t" style="top:191px;font-size:19.4px;line-height:22px;color:#555e6e;left:557.5px;">F2</div>
<div class="b" style="left:1814px;top:174px;width:163.4px;height:56px;background:#fff;border-radius:13px;box-shadow:0 2px 8px rgba(0,0,0,.08);"></div>
<svg class="b" style="left:0px;top:0px;" width="2020" height="1256" viewBox="0 0 2020 1256"><circle cx="1840.500" cy="200" r="8.600" fill="none" stroke="#444" stroke-width="2"/><path d="M1846.800 206.300l6 6" stroke="#444" stroke-width="2.200" stroke-linecap="round"/><path d="M1858.9 214V219H1853.4z" fill="#444"/><path d="M1881.800 194.600h12.400l-4.600 6.200v7.600l-3.300-2.300v-5.300z" fill="none" stroke="#444" stroke-width="2" stroke-linejoin="round"/><path d="M1897.500 194.600h5.700M1894.500 201.600h8.700M1894.500 208.600h8.700" stroke="#444" stroke-width="2"/><path d="M1909.5 214V219H1904z" fill="#444"/><rect x="1920.400" y="190.800" width="1.300" height="22.700" fill="#e3e3e3"/><path d="M1939.300 201c2.600-4.500 6.200-6.800 10.300-6.800s7.700 2.300 10.300 6.800c-2.600 4.500-6.200 6.800-10.300 6.800s-7.700-2.300-10.300-6.800z" fill="none" stroke="#444" stroke-width="2"/><circle cx="1949.600" cy="201" r="3.600" fill="none" stroke="#444" stroke-width="1.900"/><path d="M1947.800 200.300a2 2 0 0 1 1.700-1.500" stroke="#444" stroke-width="1.100" fill="none"/><path d="M1967.0 214V219H1961.5z" fill="#444"/></svg>
<svg class="b" style="left:460px;top:655px;" width="30" height="90" viewBox="0 0 30 90"><path d="M0 5.500L21.500 16.300Q24.500 17.800 24.500 21V63.500Q24.500 66.700 21.500 68.200L0 79z" fill="#fff"/><path d="M13.600 36.500L5 45l8.600 8.500" fill="none" stroke="#444" stroke-width="2.200" stroke-linecap="round" stroke-linejoin="round"/></svg>
<div class="b" style="left:1044px;top:1123.5px;width:372px;height:55.7px;background:#fff;border-radius:13px;box-shadow:0 2px 8px rgba(0,0,0,.08);"></div>
<div class="b" style="left:1100px;top:1123.5px;width:1.3px;height:55.7px;background:#dcdcdc;"></div>
<div class="b" style="left:1207.5px;top:1140.5px;width:1.3px;height:22px;background:#e0e0e0;"></div>
<svg class="b" style="left:0px;top:0px;" width="2020" height="1256" viewBox="0 0 2020 1256"><path d="M1063 1141.600h9.500l6 6v3.300l-7.700 7.700v2.900H1063a2.500 2.500 0 0 1-2.500-2.500v-14.900a2.500 2.500 0 0 1 2.500-2.500z" fill="#1f45ff"/><path d="M1072.500 1141.600v4.300a1.700 1.700 0 0 0 1.700 1.700h4.300" fill="none" stroke="#fff" stroke-width="1.200"/><path d="M1072.600 1161.500v-2.700l7.300-7.300 2.700 2.700-7.300 7.300z" fill="#1f45ff"/><path d="M1080.700 1150.600l1.100-1.100a1 1 0 0 1 1.400 0l1.300 1.300a1 1 0 0 1 0 1.400l-1.100 1.100z" fill="#1f45ff"/><rect x="1120.500" y="1143" width="17.500" height="17.500" rx="2.500" fill="none" stroke="#444" stroke-width="2" stroke-dasharray="4.200 2.700" stroke-dashoffset="2"/><g transform="translate(1180 1151.500) rotate(45)"><rect x="-11" y="-3.800" width="22" height="7.600" rx="1.500" fill="none" stroke="#444" stroke-width="2"/><path d="M-6.800 -3.800v3M-3.400 -3.800v3M0 -3.800v3M3.400 -3.800v3M6.800 -3.800v3" stroke="#444" stroke-width="1.200"/></g><circle cx="1235.5" cy="1149.5" r="8.500" fill="none" stroke="#444" stroke-width="2"/><path d="M1241.7 1155.7l6.300 6.300" stroke="#444" stroke-width="2.200" stroke-linecap="round"/><path d="M1231 1149.500h9M1235.500 1145v9" stroke="#444" stroke-width="2"/><circle cx="1285.7" cy="1149.5" r="8.500" fill="none" stroke="#444" stroke-width="2"/><path d="M1291.9 1155.7l6.300 6.300" stroke="#444" stroke-width="2.200" stroke-linecap="round"/><path d="M1281.200 1149.500h9" stroke="#444" stroke-width="2"/><circle cx="1336.5" cy="1148.5" r="8.500" fill="none" stroke="#444" stroke-width="2"/><path d="M1342.7 1154.7l6.300 6.300" stroke="#444" stroke-width="2.200" stroke-linecap="round"/><path d="M1331.500 1152l3.300-4 2.200 2.400 1.500-1.600 2.800 3.200z" fill="#444"/><circle cx="1339.500" cy="1145.500" r="1.200" fill="#444"/><circle cx="1386.7" cy="1148.5" r="8.500" fill="none" stroke="#444" stroke-width="2"/><path d="M1392.9 1154.7l6.300 6.300" stroke="#444" stroke-width="2.200" stroke-linecap="round"/><rect x="1382.500" y="1144.300" width="8.400" height="8.400" rx="1.200" fill="none" stroke="#444" stroke-width="1.400" stroke-dasharray="2 1.200"/></svg>
<div class="b" style="left:460px;top:1202px;width:1540px;height:45.5px;background:#dcdcdc;border-top:1.500px solid #c6c6c6;border-radius:0 0 6px 0;"></div>
<div class="t" style="top:1216px;font-size:16.7px;line-height:19px;color:#222;left:476.8px;">Demo</div>
<div class="t" style="top:1216px;font-size:16.7px;line-height:19px;color:#222;left:629.7px;">Playback</div>
<div class="b" style="left:533px;top:1210.7px;width:61.4px;height:30.2px;background:#b9bdc9;border-radius:15.100px;"></div>
<div class="b" style="left:535.6px;top:1213.2px;width:25.2px;height:25.2px;background:#fff;border-radius:50%;box-shadow:0 1px 3px rgba(0,0,0,.2);"></div>
<div class="t" style="top:1217px;font-size:15.4px;line-height:17px;color:#fff;left:576px;transform:translateX(-50%);">N</div>
<div class="b" style="left:709.5px;top:1210.7px;width:61.4px;height:30.2px;background:#b9bdc9;border-radius:15.100px;"></div>
<div class="b" style="left:712.1px;top:1213.2px;width:25.2px;height:25.2px;background:#fff;border-radius:50%;box-shadow:0 1px 3px rgba(0,0,0,.2);"></div>
<div class="t" style="top:1217px;font-size:15.4px;line-height:17px;color:#fff;left:752.5px;transform:translateX(-50%);">N</div>
<div class="t" style="top:1216px;font-size:16.7px;line-height:19px;color:#222;left:800.6px;">Robot Operation Record</div>
<div class="t" style="top:1216px;font-size:16.7px;line-height:19px;color:#222;left:979.3px;font-family:"Liberation Sans","Noto Sans CJK SC",sans-serif;">：</div>
<div class="t" style="top:1216px;font-size:16.7px;line-height:19px;color:#222;left:1001.7px;">On</div>
<div class="t" style="top:1216px;font-size:16.7px;line-height:19px;color:#222;left:1047.65px;">Dispatch Strategy: DP1</div>
<div class="t" style="top:1216px;font-size:16.7px;line-height:19px;color:#222;left:1247px;">Traffic Strategy: TP1</div>
<div class="t" style="top:1216px;font-size:16.7px;line-height:19px;color:#222;left:1423px;">Auto Charge: Pause</div>
<div class="b" style="left:611.1999999999999px;top:1210.8px;width:1.4px;height:26.4px;background:#c4c4c4;"></div>
<div class="b" style="left:787.6999999999999px;top:1210.8px;width:1.4px;height:26.4px;background:#c4c4c4;"></div>
<div class="b" style="left:1034.8px;top:1210.8px;width:1.4px;height:26.4px;background:#c4c4c4;"></div>
<div class="b" style="left:1234.1px;top:1210.8px;width:1.4px;height:26.4px;background:#c4c4c4;"></div>
<div class="b" style="left:1410.6px;top:1210.8px;width:1.4px;height:26.4px;background:#c4c4c4;"></div>
<div class="b" style="left:1583.8px;top:1210.8px;width:1.4px;height:26.4px;background:#c4c4c4;"></div>
<div class="b" style="left:1909.5px;top:1206px;width:90.5px;height:41.5px;background:#dfdfdf;border-radius:0 0 6px 0;box-shadow:-1px -1px 4px rgba(0,0,0,.06);"></div>
<div class="t" style="top:1216px;font-size:17.6px;line-height:20px;color:#9a9a9a;left:1921.8px;">7 mm/px</div>
<div class="b" style="left:1955px;top:586.3px;width:56px;height:167px;background:rgba(60,60,60,.36);border-radius:8px;"></div>
<svg class="b" style="left:0px;top:0px;" width="2020" height="1256" viewBox="0 0 2020 1256"><path d="M1975.300 617.500l1.300-12.500a2 2 0 0 1 2-1.800h8.800a2 2 0 0 1 2 1.800l1.300 12.500" fill="none" stroke="#555" stroke-width="2"/><rect x="1971.500" y="617.500" width="23" height="5" rx="1.200" fill="none" stroke="#555" stroke-width="2"/><path d="M1980.500 607l-.7 7" stroke="#555" stroke-width="1.300"/><path d="M1969.600 602l2.500 2M1968 609.600h3.300M1996.400 602l-2.500 2M1998 609.600h-3.300" stroke="#555" stroke-width="1.600" stroke-linecap="round"/><rect x="1970" y="658.800" width="26.500" height="19.700" rx="2.200" fill="none" stroke="#555" stroke-width="2.200"/><path d="M1973 669h6.500l2.200-3 3 5.500 2.200-3.300h4" fill="none" stroke="#555" stroke-width="1.600"/><path d="M1976 715.500h1.500l2.700-3h6.600l2.700 3h1.500a2 2 0 0 1 2 2v17.500a2 2 0 0 1-2 2H1976a2 2 0 0 1-2-2V717.500a2 2 0 0 1 2-2z" fill="#555"/><circle cx="1983.400" cy="716.300" r="1.500" fill="#b3b3b3"/><path d="M1979 722h8.800" stroke="#b3b3b3" stroke-width="1.200"/><path d="M1984 711.500l8-8.700" stroke="#555" stroke-width="1.500"/></svg>
</body></html>
